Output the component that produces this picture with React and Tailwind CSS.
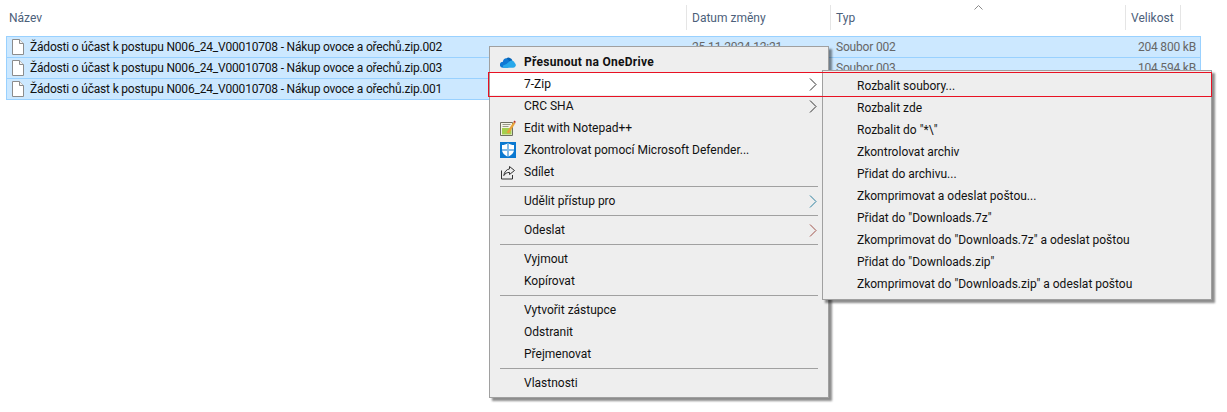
const sans = "font-['Roboto',sans-serif]";

const files = [
  { name: "Žádosti o účast k postupu N006_24_V00010708 - Nákup ovoce a ořechů.zip.002", date: "25.11.2024 12:21", type: "Soubor 002", size: "204 800 kB" },
  { name: "Žádosti o účast k postupu N006_24_V00010708 - Nákup ovoce a ořechů.zip.003", date: "25.11.2024 12:21", type: "Soubor 003", size: "104 594 kB" },
  { name: "Žádosti o účast k postupu N006_24_V00010708 - Nákup ovoce a ořechů.zip.001", date: "25.11.2024 12:20", type: "Soubor 001", size: "204 800 kB" },
];

const subItems = [
  "Rozbalit soubory...",
  "Rozbalit zde",
  'Rozbalit do "*\\"',
  "Zkontrolovat archiv",
  "Přidat do archivu...",
  "Zkomprimovat a odeslat poštou...",
  'Přidat do "Downloads.7z"',
  'Zkomprimovat do "Downloads.7z" a odeslat poštou',
  'Přidat do "Downloads.zip"',
  'Zkomprimovat do "Downloads.zip" a odeslat poštou',
];

function FileIcon() {
  return (
    <svg width="12" height="16" viewBox="0 0 12 16" className="shrink-0">
      <path d="M.5.5h7l4 4v11H.5z" fill="#fff" stroke="#8c8c8c" />
      <path d="M7.5.5v4h4" fill="#f2f2f2" stroke="#8c8c8c" />
    </svg>
  );
}

function Chevron({ color = "#333" }) {
  return (
    <svg width="8" height="13" viewBox="0 0 8 13" className="shrink-0">
      <path d="M1 .5l6 6-6 6" fill="none" stroke={color} strokeWidth="1" />
    </svg>
  );
}

function OneDrive() {
  return (
    <svg width="16" height="11" viewBox="0 0 16 11">
      <path d="M6.4 1.2A4 4 0 0 1 12.4 3.6L9 8z" fill="#0364b8" />
      <path d="M3 10.8A3 3 0 0 1 2.9 4.7 4 4 0 0 1 6.4 1.2L12 6.5 8 10.8z" fill="#0f78d4" />
      <path d="M3 10.8h10.2A2.7 2.7 0 0 0 14.8 6 3.4 3.4 0 0 0 9.4 4.4L6.5 7 3 8.6z" fill="#28a8ea" />
    </svg>
  );
}

function Notepad() {
  return (
    <svg width="16" height="16" viewBox="0 0 16 16">
      <path d="M.5 2.5h12v13H.5z" fill="#f4f4e8" stroke="#6f6f60" />
      <path d="M2 8h9.5v6.5H2z" fill="#a5cf4e" />
      <path d="M2.5 4.5h8M2.5 6.5h6" stroke="#9a9a8a" />
      <path d="M6.5 12.5L13.5 2l1.8 1.2L9 13.5z" fill="#e8a33a" />
      <path d="M13.5 2l.7-1.4 1.5 1-.5 1.6z" fill="#b5322a" />
    </svg>
  );
}

function Defender() {
  return (
    <svg width="16" height="16" viewBox="0 0 16 16">
      <path d="M0 0h16v16H0z" fill="#0a78d0" />
      <path d="M8 1.2c1.9 1.2 3.8 1.7 6 1.8v4.8c0 3.3-2.8 5.6-6 7-3.2-1.4-6-3.7-6-7V3c2.2-.1 4.1-.6 6-1.8z" fill="#fff" />
      <path d="M7.5 1.5v13.5h1V1.5zM2 7.5h12v1H2z" fill="#0a78d0" />
    </svg>
  );
}

function Share() {
  return (
    <svg width="16" height="15" viewBox="0 0 16 15" fill="none" stroke="#333">
      <path d="M1.5 5.5v8.5h11v-4" />
      <path d="M9.5 1.5l5 4-5 4V7.4C7 7.4 5 8.4 3.8 10.6 4.2 7.2 6.3 4.4 9.5 3.9z" />
    </svg>
  );
}

function MenuRow({ icon, label, arrow, arrowColor, bold, active }) {
  return (
    <div className={`flex h-[22px] items-center pl-[8px] pr-[11px] text-[12px] text-[#111] ${active ? "bg-white" : ""} ${bold ? "font-bold tracking-[0.28px]" : ""}`}>
      <span className="flex w-[26px] shrink-0 items-center pl-[2px]">{icon}</span>
      <span className="flex-1 whitespace-nowrap">{label}</span>
      {arrow && <Chevron color={arrowColor} />}
    </div>
  );
}

function Sep() {
  return (
    <div className="flex h-[7px] items-center pl-[10px] pr-[10px]">
      <div className="h-px w-full bg-[#a0a0a0]" />
    </div>
  );
}

function HeaderCell({ label, className }) {
  return <div className={`flex h-[25px] items-center border-r border-[#e5e5e5] pl-[5px] text-[12px] text-[#4c607a] ${className}`}>{label}</div>;
}

export default function App() {
  return (
    <div className={`relative h-[412px] w-[1227px] overflow-hidden bg-white ${sans}`}>
      {/* column headers */}
      <div className="flex pt-[5px]">
        <div className="flex h-[25px] w-[687px] items-center border-r border-[#e5e5e5] pl-[9px] text-[12px] text-[#4c607a]">Název</div>
        <HeaderCell label="Datum změny" className="w-[144px]" />
        <HeaderCell label="Typ" className="w-[295px]" />
        <HeaderCell label="Velikost" className="w-[55px]" />
      </div>

      <svg width="9" height="5" viewBox="0 0 9 5" className="absolute left-[974px] top-[5px]">
        <path d="M.5 4.5l4-4 4 4" fill="none" stroke="#8a8a8a" />
      </svg>

      {/* file rows */}
      <div className="ml-[6px] mt-[6px] w-[1195px]">
        {files.map((f, i) => (
          <div key={i} className={`flex items-center border-x border-b border-[#99d1ff] bg-[#cce8ff] text-[12px] tracking-[-0.19px] ${i === 0 ? "h-[22px] border-t" : "h-[21px]"}`}>
            <div className="flex w-[680px] items-center gap-[6px] pl-[5px] text-[#111]">
              <FileIcon />
              <span className="whitespace-nowrap">{f.name}</span>
            </div>
            <div className="w-[144px] pl-[5px] text-[#666]">{f.date}</div>
            <div className="flex-1 pl-[5px] text-[#666]">{f.type}</div>
            <div className="pr-[4px] text-right text-[#666]">{f.size}</div>
          </div>
        ))}
      </div>

      {/* main context menu */}
      <div className="absolute left-[489px] top-[46px] w-[340px] border border-[#a0a0a0] bg-[#eeeeee] pt-[4px] pb-[3px] shadow-[3px_3px_2px_rgba(0,0,0,0.45)]">
        <MenuRow icon={<OneDrive />} label="Přesunout na OneDrive" bold />
        <MenuRow label="7-Zip" arrow active />
        <MenuRow label="CRC SHA" arrow />
        <MenuRow icon={<Notepad />} label="Edit with Notepad++" />
        <MenuRow icon={<Defender />} label="Zkontrolovat pomocí Microsoft Defender..." />
        <MenuRow icon={<Share />} label="Sdílet" />
        <Sep />
        <MenuRow label="Udělit přístup pro" arrow arrowColor="#2a7f9e" />
        <Sep />
        <MenuRow label="Odeslat" arrow arrowColor="#a0524a" />
        <Sep />
        <MenuRow label="Vyjmout" />
        <MenuRow label="Kopírovat" />
        <Sep />
        <MenuRow label="Vytvořit zástupce" />
        <MenuRow label="Odstranit" />
        <MenuRow label="Přejmenovat" />
        <Sep />
        <MenuRow label="Vlastnosti" />
      </div>

      {/* 7-Zip submenu */}
      <div className="absolute left-[822px] top-[70px] w-[390px] border border-[#a0a0a0] bg-[#eeeeee] py-[4px] shadow-[3px_3px_2px_rgba(0,0,0,0.45)]">
        {subItems.map((s) => (
          <div key={s} className="flex h-[22px] items-center pl-[34px] text-[12px] text-[#111]">{s}</div>
        ))}
      </div>

      {/* red highlight */}
      <div className="absolute left-[488px] top-[72px] h-[25px] w-[724px] border border-[#e81123]" />
    </div>
  );
}
